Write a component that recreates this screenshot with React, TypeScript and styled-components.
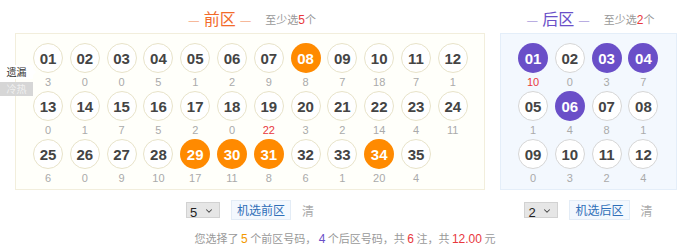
import { FC } from "react";
import styled, { createGlobalStyle, css } from "styled-components";
import { ChevronDown } from "lucide-react";

const GlobalStyle = createGlobalStyle`
  * { box-sizing: border-box; }
  body {
    margin: 0;
    background: #fff;
    font-family: "Liberation Sans", "Noto Sans CJK SC", sans-serif;
    color: #333;
  }
`;

type Zone = "front" | "back";

const frontMiss = [
  3, 0, 0, 5, 1, 2, 9, 8, 7, 18, 7, 1,
  0, 1, 7, 5, 2, 0, 22, 3, 2, 14, 4, 11,
  6, 0, 9, 10, 17, 11, 8, 6, 1, 20, 4,
];
const backMiss = [10, 0, 3, 7, 1, 4, 8, 1, 0, 3, 2, 4];

const frontPicked = [8, 29, 30, 31, 34];
const backPicked = [1, 3, 4, 6];

const pad = (n: number) => (n < 10 ? "0" + n : "" + n);

const App: FC = () => {
  const frontMax = Math.max(...frontMiss);
  const backMax = Math.max(...backMiss);

  return (
    <Page>
      <GlobalStyle />
      <Zones>
        <Section $width={470}>
          <Header>
            <Title $zone="front">
              <span className="dash">—</span>前区<span className="dash">—</span>
            </Title>
            <Hint>
              至少选<em>5</em>个
            </Hint>
          </Header>
          <Board $zone="front">
            <Tabs>
              <Tab $active>遗漏</Tab>
              <Tab>冷热</Tab>
            </Tabs>
            <Grid $cols={12}>
              {frontMiss.map((miss, i) => (
                <Cell key={i}>
                  <Ball $zone="front" $picked={frontPicked.includes(i + 1)}>
                    {pad(i + 1)}
                  </Ball>
                  <Miss $hot={miss === frontMax}>{miss}</Miss>
                </Cell>
              ))}
            </Grid>
          </Board>
          <Controls>
            <SelectBox>
              <select defaultValue="5">
                {[5, 6, 7, 8, 9, 10].map((n) => (
                  <option key={n}>{n}</option>
                ))}
              </select>
              <ChevronDown size={10} strokeWidth={2.5} />
            </SelectBox>
            <RandomButton>机选前区</RandomButton>
            <Clear>清</Clear>
          </Controls>
        </Section>

        <Section $width={177}>
          <Header>
            <Title $zone="back">
              <span className="dash">—</span>后区<span className="dash">—</span>
            </Title>
            <Hint>
              至少选<em>2</em>个
            </Hint>
          </Header>
          <Board $zone="back">
            <Grid $cols={4}>
              {backMiss.map((miss, i) => (
                <Cell key={i}>
                  <Ball $zone="back" $picked={backPicked.includes(i + 1)}>
                    {pad(i + 1)}
                  </Ball>
                  <Miss $hot={miss === backMax}>{miss}</Miss>
                </Cell>
              ))}
            </Grid>
          </Board>
          <Controls>
            <SelectBox>
              <select defaultValue="2">
                {[2, 3, 4, 5].map((n) => (
                  <option key={n}>{n}</option>
                ))}
              </select>
              <ChevronDown size={10} strokeWidth={2.5} />
            </SelectBox>
            <RandomButton>机选后区</RandomButton>
            <Clear>清</Clear>
          </Controls>
        </Section>
      </Zones>

      <Summary>
        您选择了 <Num $c="#f39800">5</Num> 个前区号码， <Num $c="#6a4fc8">4</Num> 个后区号码，共{" "}
        <Num $c="#e8383d">6</Num> 注，共 <Num $c="#e8383d">12.00</Num> 元
      </Summary>
    </Page>
  );
};

export default App;

const Page = styled.div`
  width: 690px;
  height: 252px;
  background: #fff;
`;

const Zones = styled.div`
  display: flex;
  gap: 15px;
  padding-left: 15px;
`;

const Section = styled.div<{ $width: number }>`
  width: ${(p) => p.$width}px;
  display: flex;
  flex-direction: column;
`;

const Header = styled.div`
  height: 33px;
  padding-top: 4px;
  display: flex;
  align-items: center;
  justify-content: center;
  gap: 10px;
`;

const Title = styled.div<{ $zone: Zone }>`
  font-family: "Noto Sans CJK SC", sans-serif;
  font-size: 16px;
  line-height: 20px;
  color: ${(p) => (p.$zone === "front" ? "#f26b2b" : "#6a4fc8")};

  .dash {
    font-size: 13px;
    margin: 0 4px;
    color: ${(p) => (p.$zone === "front" ? "#f5a883" : "#a99bdc")};
  }
`;

const Hint = styled.div`
  font-family: "Noto Sans CJK SC", sans-serif;
  font-size: 11px;
  color: #999;

  em {
    font-style: normal;
    font-family: "Liberation Sans", sans-serif;
    font-size: 12px;
    color: #e8383d;
  }
`;

const Board = styled.div<{ $zone: Zone }>`
  position: relative;
  height: 157px;
  padding: 9px 0 0 17px;
  ${(p) =>
    p.$zone === "front"
      ? css`
          background: #fffffa;
          border: 1px solid #f2eedc;
        `
      : css`
          background: #f3f8fe;
          border: 1px solid #e4eef9;
        `}
`;

const Tabs = styled.div`
  position: absolute;
  left: -16px;
  top: 31px;
  display: flex;
  flex-direction: column;
  gap: 3px;
`;

const Tab = styled.div<{ $active?: boolean }>`
  position: relative;
  width: 33px;
  height: 14px;
  font-family: "Noto Sans CJK SC", sans-serif;
  font-size: 10px;
  line-height: 14px;
  text-align: center;
  background: ${(p) => (p.$active ? "#fff" : "#d6d6d6")};
  color: ${(p) => (p.$active ? "#333" : "#f0f0f0")};

  ${(p) =>
    p.$active &&
    css`
      &::after {
        content: "";
        position: absolute;
        right: -3px;
        top: 4px;
        border-left: 3px solid #fff;
        border-top: 3px solid transparent;
        border-bottom: 3px solid transparent;
      }
    `}
`;

const Grid = styled.div<{ $cols: number }>`
  display: grid;
  grid-template-columns: repeat(${(p) => p.$cols}, 30px);
  column-gap: 6.8px;
`;

const Cell = styled.div`
  display: flex;
  flex-direction: column;
  align-items: center;
  height: 48px;
`;

const Ball = styled.div<{ $zone: Zone; $picked: boolean }>`
  width: 30px;
  height: 30px;
  border-radius: 50%;
  display: flex;
  align-items: center;
  justify-content: center;
  font-size: 15px;
  font-weight: bold;
  color: #444;
  background: #fff;
  border: 1px solid ${(p) => (p.$zone === "front" ? "#e8e3c9" : "#d6d6d6")};

  ${(p) =>
    p.$picked &&
    css`
      color: #fff;
      border-color: transparent;
      background: ${p.$zone === "front" ? "#ff8a00" : "#6a4fc8"};
    `}
`;

const Miss = styled.div<{ $hot: boolean }>`
  height: 18px;
  line-height: 18px;
  font-size: 11px;
  color: ${(p) => (p.$hot ? "#e8383d" : "#aaa")};
`;

const Controls = styled.div`
  margin-top: 10px;
  height: 20px;
  display: flex;
  align-items: center;
  justify-content: center;
  gap: 11px;
`;

const SelectBox = styled.div`
  position: relative;
  width: 34px;
  height: 16px;
  background: #e6e6e6;
  border: 1px solid #d2d2d2;

  select {
    appearance: none;
    width: 100%;
    height: 100%;
    border: none;
    outline: none;
    background: transparent;
    font-family: "Liberation Sans", sans-serif;
    font-size: 13px;
    line-height: 14px;
    color: #222;
    padding: 0 0 0 3px;
  }

  svg {
    position: absolute;
    right: 5px;
    top: 3px;
    color: #444;
    pointer-events: none;
  }
`;

const RandomButton = styled.button`
  height: 20px;
  padding: 0 5px;
  border: 1px solid #e3ecf6;
  background: #f3f8fe;
  color: #2f6fb8;
  font-family: "Noto Sans CJK SC", sans-serif;
  font-size: 12px;
  line-height: 18px;
  cursor: pointer;
`;

const Clear = styled.span`
  font-family: "Noto Sans CJK SC", sans-serif;
  font-size: 12px;
  color: #aaa;
  cursor: pointer;
`;

const Summary = styled.div`
  margin-top: 9px;
  text-align: center;
  font-family: "Noto Sans CJK SC", sans-serif;
  font-size: 11px;
  line-height: 18px;
  color: #999;
`;

const Num = styled.span<{ $c: string }>`
  font-family: "Liberation Sans", sans-serif;
  font-size: 12px;
  color: ${(p) => p.$c};
`;
